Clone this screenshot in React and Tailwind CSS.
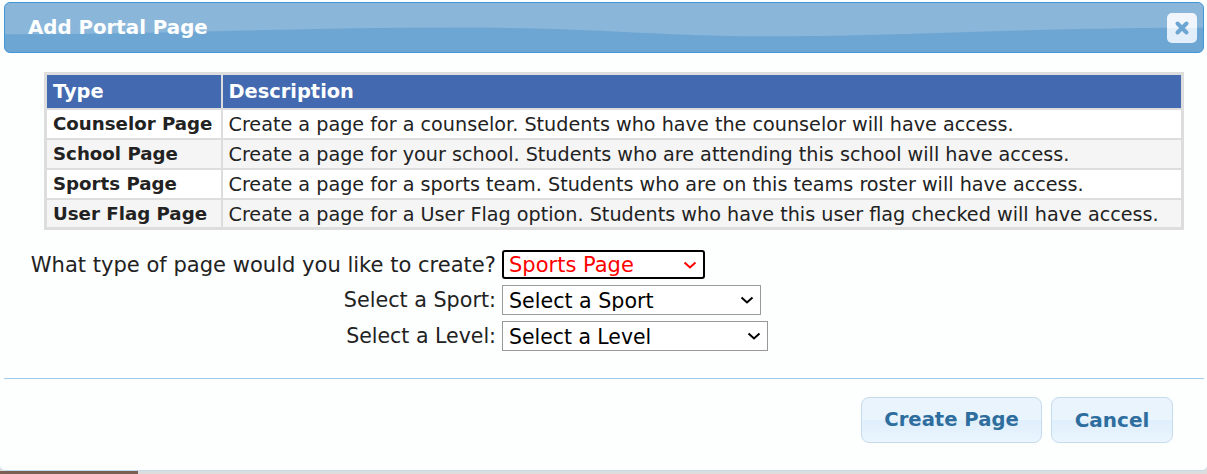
const rows = [
  ['Counselor Page', 'Create a page for a counselor. Students who have the counselor will have access.'],
  ['School Page', 'Create a page for your school. Students who are attending this school will have access.'],
  ['Sports Page', 'Create a page for a sports team. Students who are on this teams roster will have access.'],
  ['User Flag Page', 'Create a page for a User Flag option. Students who have this user flag checked will have access.'],
]

function FormRow({ label, labelClass, children }) {
  return (
    <div className="flex items-center">
      <label className={`w-[496px] text-right leading-none text-[#222222] ${labelClass}`}>{label}</label>
      <div className="ml-[6px] flex">{children}</div>
    </div>
  )
}

function Select({ text, className, iconClass, arrowRight }) {
  return (
    <div className="relative">
      <select className={`block appearance-none bg-white pt-[2px] pl-[5px] leading-none ${className}`}>
        <option>{text}</option>
      </select>
      <svg width="14" height="8" viewBox="0 0 14 8" fill="none" className={`pointer-events-none absolute top-[11px] ${arrowRight} ${iconClass}`}>
        <path d="M1.5 1.5L7 6.5L12.5 1.5" stroke="currentColor" strokeWidth="2" />
      </svg>
    </div>
  )
}

export default function App() {
  return (
    <div className="h-[474px] w-[1207px] overflow-hidden bg-[#dddddd] font-['DejaVu_Sans',sans-serif]">
      <div className="h-[471px] rounded-b-[5px] border-b border-[#c5dbec] bg-[#fdfefe] pt-[2px] pr-[3px] pl-[4px]">
        <header className="relative flex h-[51px] items-center overflow-hidden rounded-[6px] border border-[#4297d7] bg-[#6ea6d3] pl-[23px]">
          <svg className="absolute inset-0 h-full w-full" viewBox="0 0 1200 50" preserveAspectRatio="none">
            <path d="M0 32C150 32 300 25 450 25C600 25 650 34 770 34C900 34 1000 26 1200 25V0H0Z" fill="#8ab6da" />
          </svg>
          <h1 className="relative text-[19.8px] leading-none font-bold text-[#fdfefe]">Add Portal Page</h1>
          <button className="relative mr-[6px] ml-auto flex h-[30px] w-[30px] items-center justify-center rounded-[5px] bg-[linear-gradient(#f0f6fc_50%,#e2effb_50%)]">
            <svg width="16" height="16" viewBox="0 0 16 16">
              <path d="M3.5 3.5l9 9M12.5 3.5l-9 9" stroke="#6ea6d3" strokeWidth="4" strokeLinecap="round" />
            </svg>
          </button>
        </header>

        <table className="mt-[19px] ml-[40px] w-[1140px] table-fixed border-collapse border-[3px] border-[#dddddd] leading-none text-[#222222]">
          <thead>
            <tr className="h-[35px] bg-[#4369b0] text-left text-[#fdfefe]">
              <th className="w-[176px] border-r-2 border-[#dddddd] px-[6px] text-[19.4px] font-bold">Type</th>
              <th className="px-[6px] text-[19.4px] font-bold">Description</th>
            </tr>
          </thead>
          <tbody>
            {rows.map(([type, desc], i) => (
              <tr key={type} className={`h-[30px] border-t-2 border-[#dddddd] ${i % 2 ? 'bg-[#f5f5f5]' : 'bg-white'}`}>
                <td className="border-r-2 border-[#dddddd] px-[6px] pt-[2px] text-[18.2px] font-bold whitespace-nowrap">{type}</td>
                <td className="px-[6px] pt-[2px] text-[19.2px] whitespace-nowrap">{desc}</td>
              </tr>
            ))}
          </tbody>
        </table>

        <div className="mt-[20px] -ml-[4px] flex flex-col gap-[6px]">
          <FormRow label="What type of page would you like to create?" labelClass="text-[21.05px]">
            <Select
              text="Sports Page"
              className="h-[29px] w-[203px] rounded-[3px] border-2 border-black text-[21px] text-[#ff0000]"
              iconClass="text-[#ff0000]"
              arrowRight="right-[8px]"
            />
          </FormRow>
          <FormRow label="Select a Sport:" labelClass="text-[20.7px]">
            <Select
              text="Select a Sport"
              className="h-[30px] w-[259px] border border-[#999999] pl-[6px] text-[20.6px] text-black"
              iconClass="text-black"
              arrowRight="right-[7px]"
            />
          </FormRow>
          <FormRow label="Select a Level:" labelClass="text-[20.5px]">
            <Select
              text="Select a Level"
              className="h-[30px] w-[266px] border border-[#999999] pl-[6px] text-[20.4px] text-black"
              iconClass="text-black"
              arrowRight="right-[7px]"
            />
          </FormRow>
        </div>

        <div className="mt-[27px] flex justify-end gap-[9px] border-t border-[#a0cbec] pt-[18px] pr-[31px]">
          <button className="h-[46px] w-[181px] rounded-[8px] border border-[#c5dbec] bg-[linear-gradient(#eaf4fd_50%,#dfeffc_50%,#ebf5fe)] text-[19.6px] font-bold text-[#2e6e9e]">Create Page</button>
          <button className="h-[46px] w-[122px] rounded-[8px] border border-[#c5dbec] bg-[linear-gradient(#eaf4fd_50%,#dfeffc_50%,#ebf5fe)] text-[20px] font-bold text-[#2e6e9e]">Cancel</button>
        </div>
      </div>
      <div className="h-[3px] w-[138px] bg-[#7a5f55]" />
    </div>
  )
}
